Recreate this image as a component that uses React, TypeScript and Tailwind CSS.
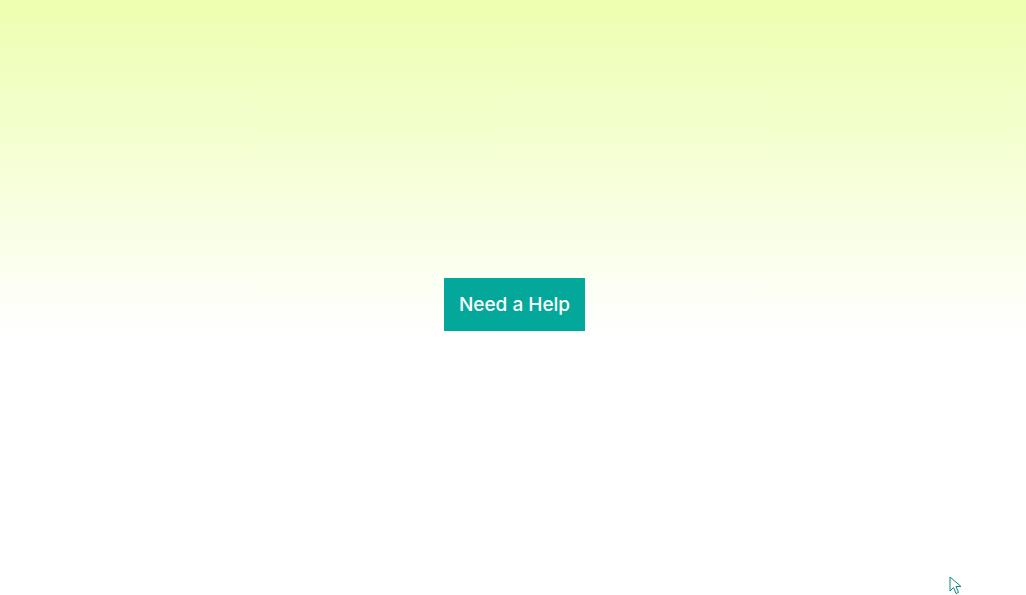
export default function App() {
  return (
    <div className="relative flex h-[595px] w-full items-center justify-center overflow-hidden bg-[linear-gradient(180deg,#edffb0_0%,#f6ffd9_30%,#ffffff_56%,#ffffff_100%)] pl-[3px] pt-[14px] font-['Inter',sans-serif]">
      <button
        type="button"
        className="flex h-[53px] w-[141px] items-center justify-center bg-[#03a89a] pt-[2px] text-[19px] font-medium text-white"
      >
        Need a Help
      </button>

      <svg
        className="absolute left-[949px] top-[576px]"
        width="14"
        height="20"
        viewBox="0 0 14 20"
        fill="none"
      >
        <path
          d="M1 1 L1 15 L4.5 11.5 L7 17.5 L9.5 16.5 L7 10.5 L12 10.5 Z"
          fill="#ffffff"
          stroke="#0f8a80"
          strokeWidth="1"
          strokeLinejoin="miter"
        />
      </svg>
    </div>
  );
}
